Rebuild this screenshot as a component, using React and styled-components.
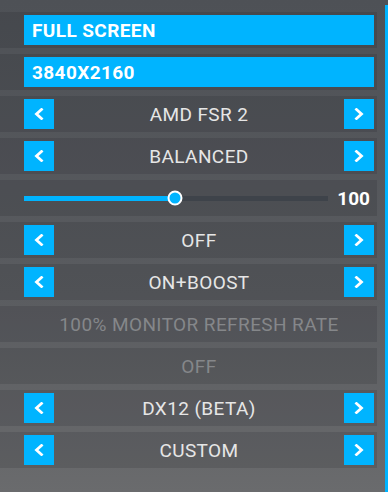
import React from "react";
import styled, { createGlobalStyle } from "styled-components";

const Global = createGlobalStyle`
  html, body { margin: 0; padding: 0; }
  body {
    width: 388px; height: 492px; overflow: hidden;
    font-family: Roboto, "Liberation Sans", sans-serif;
  }
`;

const BLUE = "#00b4ff";

const Page = styled.div`
  position: relative;
  width: 388px;
  height: 492px;
  background: linear-gradient(to bottom, #4e5156 0%, #5a5c60 60%, #6a6b6d 100%);
  padding-top: 12px;
  box-sizing: border-box;
  display: flex;
  flex-direction: column;
  gap: 6px;
`;

const EdgeBar = styled.div`
  position: absolute;
  top: 5px;
  bottom: 0;
  right: 0;
  width: 3px;
  background: ${BLUE};
`;

const Row = styled.div`
  width: 377px;
  height: 36px;
  box-sizing: border-box;
  padding: 3px 3px 3px 24px;
  background: rgba(20, 22, 26, 0.14);
  display: flex;
  align-items: center;
`;

const Selected = styled.div`
  flex: 1;
  height: 30px;
  background: ${BLUE};
  color: #fff;
  font-weight: 700;
  font-size: 19px;
  letter-spacing: 0.4px;
  display: flex;
  align-items: center;
  padding-left: 8px;
`;

const ArrowBtn = styled.div`
  width: 30px;
  height: 30px;
  flex: none;
  background: ${BLUE};
  display: flex;
  align-items: center;
  justify-content: center;
`;

const Value = styled.div`
  flex: 1;
  text-align: center;
  font-size: 19px;
  letter-spacing: 0.4px;
  color: ${(p) => (p.$disabled ? "#85878a" : "#e6e6e6")};
`;

const SliderWrap = styled.div`
  flex: 1;
  display: flex;
  align-items: center;
`;

const Track = styled.div`
  position: relative;
  width: 304px;
  height: 5px;
  background: #3e434a;
`;

const Fill = styled.div`
  height: 100%;
  background: ${BLUE};
`;

const Thumb = styled.div`
  position: absolute;
  top: 50%;
  width: 11px;
  height: 11px;
  border: 2.5px solid #fff;
  border-radius: 50%;
  background: ${BLUE};
  transform: translate(-50%, -50%);
`;

const SliderValue = styled.div`
  flex: 1;
  text-align: right;
  padding-right: 4px;
  color: #fff;
  font-weight: 700;
  font-size: 19px;
`;

const Chevron = ({ dir }) => (
  <svg width="10" height="12" viewBox="0 0 10 12">
    <path
      d={dir === "left" ? "M7.5 1.5 L2.5 6 L7.5 10.5" : "M2.5 1.5 L7.5 6 L2.5 10.5"}
      fill="none"
      stroke="#fff"
      strokeWidth="2.8"
      strokeLinecap="square"
    />
  </svg>
);

const Selector = ({ label }) => (
  <Row>
    <ArrowBtn><Chevron dir="left" /></ArrowBtn>
    <Value>{label}</Value>
    <ArrowBtn><Chevron dir="right" /></ArrowBtn>
  </Row>
);

const Disabled = ({ label }) => (
  <Row>
    <Value $disabled>{label}</Value>
  </Row>
);

export default function App() {
  const pct = 0.497;
  return (
    <>
      <Global />
      <Page>
        <Row><Selected>FULL SCREEN</Selected></Row>
        <Row><Selected>3840X2160</Selected></Row>
        <Selector label="AMD FSR 2" />
        <Selector label="BALANCED" />
        <Row>
          <SliderWrap>
            <Track>
              <Fill style={{ width: `${pct * 100}%` }} />
              <Thumb style={{ left: `${pct * 100}%` }} />
            </Track>
            <SliderValue>100</SliderValue>
          </SliderWrap>
        </Row>
        <Selector label="OFF" />
        <Selector label="ON+BOOST" />
        <Disabled label="100% MONITOR REFRESH RATE" />
        <Disabled label="OFF" />
        <Selector label="DX12 (BETA)" />
        <Selector label="CUSTOM" />
        <EdgeBar />
      </Page>
    </>
  );
}
